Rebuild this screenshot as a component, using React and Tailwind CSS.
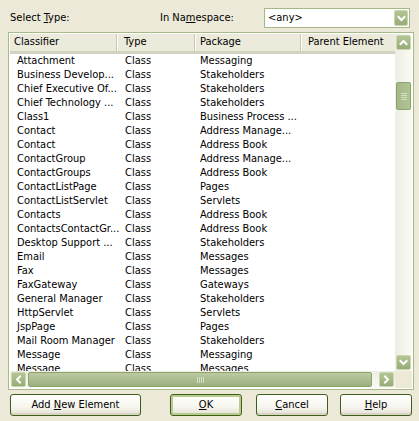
import React from "react";

const rows = [
  ["Attachment", "Class", "Messaging"],
  ["Business Develop...", "Class", "Stakeholders"],
  ["Chief Executive Of...", "Class", "Stakeholders"],
  ["Chief Technology ...", "Class", "Stakeholders"],
  ["Class1", "Class", "Business Process ..."],
  ["Contact", "Class", "Address Manage..."],
  ["Contact", "Class", "Address Book"],
  ["ContactGroup", "Class", "Address Manage..."],
  ["ContactGroups", "Class", "Address Book"],
  ["ContactListPage", "Class", "Pages"],
  ["ContactListServlet", "Class", "Servlets"],
  ["Contacts", "Class", "Address Book"],
  ["ContactsContactGr...", "Class", "Address Book"],
  ["Desktop Support ...", "Class", "Stakeholders"],
  ["Email", "Class", "Messages"],
  ["Fax", "Class", "Messages"],
  ["FaxGateway", "Class", "Gateways"],
  ["General Manager", "Class", "Stakeholders"],
  ["HttpServlet", "Class", "Servlets"],
  ["JspPage", "Class", "Pages"],
  ["Mail Room Manager", "Class", "Stakeholders"],
  ["Message", "Class", "Messaging"],
  ["Message", "Class", "Messages"],
];

const pts = {
  up: "1.5,6 4.5,3 7.5,6",
  down: "1.5,3 4.5,6 7.5,3",
  left: "6,1.5 3,4.5 6,7.5",
  right: "3,1.5 6,4.5 3,7.5",
};

function Chevron({ dir }) {
  return (
    <svg width="9" height="9" viewBox="0 0 9 9">
      <polyline points={pts[dir]} fill="none" stroke="#ffffff" strokeWidth="2" strokeLinecap="square" />
    </svg>
  );
}

function ScrollBtn({ dir }) {
  return (
    <div className="w-[17px] h-[17px] p-[1px] shrink-0">
      <div className="w-full h-full rounded-[2px] border border-[#c9d6b0] bg-[linear-gradient(180deg,#b4c594,#96ac76)] flex items-center justify-center">
        <Chevron dir={dir} />
      </div>
    </div>
  );
}

function Btn({ children, w, def }) {
  return (
    <div
      className={
        "h-[22px] rounded-[3px] border border-[#3d5f1c] bg-[linear-gradient(180deg,#ffffff_0%,#f6f5ee_60%,#e3dfd2_100%)] flex items-center justify-center text-black text-[11px] " +
        (def ? "shadow-[inset_0_0_0_2px_#b9cc8e]" : "shadow-[inset_0_-2px_0_#d8d3c3]")
      }
      style={{ width: w }}
    >
      <span className="whitespace-pre">{children}</span>
    </div>
  );
}

export default function App() {
  return (
    <div className="w-[419px] h-[421px] bg-[#ECE9D8] font-['DejaVu_Sans_Condensed','Liberation_Sans',sans-serif] text-[11px] text-black pt-[8px] overflow-hidden">
      {/* top row */}
      <div className="flex items-center h-[20px]">
        <div className="pl-[10px] w-[160px]">
          Select <span className="underline">T</span>ype:
        </div>
        <div className="w-[104px]">
          In Na<span className="underline">m</span>espace:
        </div>
        <div className="w-[146px] h-[20px] border border-[#a5b88a] bg-white flex items-center">
          <div className="flex-1 pl-[3px]">&lt;any&gt;</div>
          <div className="w-[16px] h-[18px] p-[1px]">
            <div className="w-full h-full rounded-[2px] border border-[#c9d6b0] bg-[linear-gradient(180deg,#b4c594,#96ac76)] flex items-center justify-center">
              <Chevron dir="down" />
            </div>
          </div>
        </div>
      </div>

      {/* list */}
      <div className="ml-[8px] mt-[4px] w-[406px] h-[358px] border border-[#a8b98a] p-[1px] bg-white flex flex-col">
        <div className="flex flex-1 min-h-0">
          <div className="flex-1 min-w-0 overflow-hidden flex flex-col">
            <div className="h-[20px] shrink-0 flex bg-[#EBEADB] border-b-[3px] border-[#d6d2c2]">
              <div className="w-[107px] pl-[4px] flex items-center border-r border-[#c7c5b2] shadow-[1px_0_0_#fff]">Classifier</div>
              <div className="w-[78px] pl-[7px] flex items-center border-r border-[#c7c5b2] shadow-[1px_0_0_#fff]">Type</div>
              <div className="w-[106px] pl-[5px] flex items-center border-r border-[#c7c5b2] shadow-[1px_0_0_#fff]">Package</div>
              <div className="flex-1 pl-[7px] flex items-center whitespace-nowrap">Parent Element</div>
            </div>
            <div className="flex-1 overflow-hidden">
              {rows.map((r, i) => (
                <div key={i} className="h-[14px] flex items-center whitespace-nowrap">
                  <div className="w-[107px] shrink-0 pl-[7px]">{r[0]}</div>
                  <div className="w-[78px] shrink-0 pl-[8px]">{r[1]}</div>
                  <div className="w-[106px] shrink-0 pl-[5px]">{r[2]}</div>
                </div>
              ))}
            </div>
          </div>
          {/* vertical scrollbar */}
          <div className="w-[17px] shrink-0 flex flex-col bg-[linear-gradient(90deg,#eeede3,#fbfbf6)]">
            <ScrollBtn dir="up" />
            <div className="h-[31px]" />
            <div className="h-[28px] px-[1px]">
              <div className="w-full h-full rounded-[2px] border border-[#8ea36c] bg-[linear-gradient(90deg,#a4b886,#b1c495)] flex flex-col items-center justify-center gap-[1px]">
                <div className="w-[6px] h-[1px] bg-[#d6e0c3]" />
                <div className="w-[6px] h-[1px] bg-[#d6e0c3]" />
                <div className="w-[6px] h-[1px] bg-[#d6e0c3]" />
                <div className="w-[6px] h-[1px] bg-[#d6e0c3]" />
              </div>
            </div>
            <div className="flex-1" />
            <ScrollBtn dir="down" />
          </div>
        </div>
        {/* horizontal scrollbar */}
        <div className="h-[17px] shrink-0 flex">
          <div className="flex-1 flex bg-[linear-gradient(180deg,#eeede3,#fbfbf6)]">
            <ScrollBtn dir="left" />
            <div className="w-[345px] py-[1px] pl-[1px]">
              <div className="w-full h-full rounded-[2px] border border-[#8ea36c] bg-[linear-gradient(180deg,#bccaa2,#9bb07e)] flex items-center justify-center gap-[1px]">
                <div className="w-[1px] h-[6px] bg-[#d6e0c3]" />
                <div className="w-[1px] h-[6px] bg-[#d6e0c3]" />
                <div className="w-[1px] h-[6px] bg-[#d6e0c3]" />
                <div className="w-[1px] h-[6px] bg-[#d6e0c3]" />
              </div>
            </div>
            <div className="flex-1" />
            <ScrollBtn dir="right" />
          </div>
          <div className="w-[17px] bg-[#ECE9D8]" />
        </div>
      </div>

      {/* buttons */}
      <div className="flex mt-[4px] pl-[10px]">
        <Btn w={131}>
          Add <span className="underline">N</span>ew Element
        </Btn>
        <div className="w-[29px]" />
        <Btn w={72} def>
          <span className="underline">O</span>K
        </Btn>
        <div className="w-[14px]" />
        <Btn w={72}>
          <span className="underline">C</span>ancel
        </Btn>
        <div className="w-[12px]" />
        <Btn w={72}>
          <span className="underline">H</span>elp
        </Btn>
      </div>
    </div>
  );
}
